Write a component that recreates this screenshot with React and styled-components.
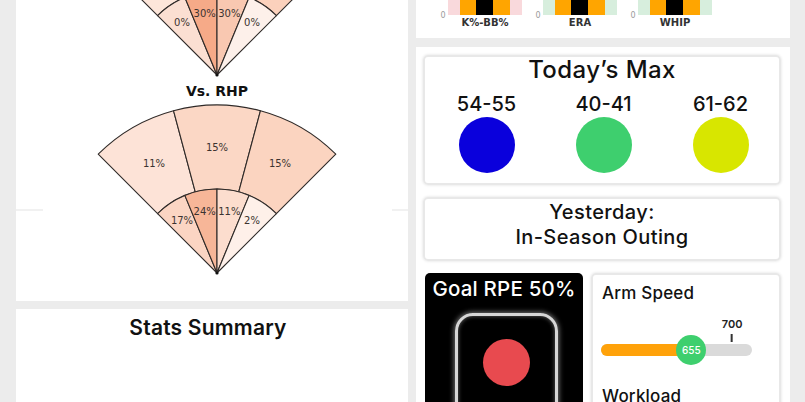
import React from 'react'
import styled, { createGlobalStyle } from 'styled-components'

const GlobalStyle = createGlobalStyle`
    html, body {
        margin: 0;
        overflow: hidden;
        background: #ececec;
    }
    body {
        font-family: Inter, "Noto Sans", sans-serif;
        color: #111;
    }
`

const ScPage = styled.div`
    display: grid;
    grid-template-columns: 392px 374px;
    column-gap: 8px;
    align-items: start;
    padding: 0 15px 0 16px;
    margin-top: -140px;
`
const ScColumn = styled.div`
    display: flex;
    flex-direction: column;
    gap: ${props => props.gap}px;
`
const ScCard = styled.div`
    background: #fff;
    height: ${props => props.height}px;
    padding: ${props => props.pad || '0'};
    box-sizing: border-box;
    overflow: hidden;
`
const ScCardTitle = styled.h2`
    margin: 0;
    text-align: center;
    font-size: 21px;
    line-height: 26px;
    font-weight: 600;
    letter-spacing: 0.2px;
    padding-right: 8px;
`
const ScChart = styled.svg`
    display: block;
`
const ScPanel = styled.div`
    background: #fff;
    height: 420px;
    padding: 8px 9px 0 7px;
    display: flex;
    flex-direction: column;
    gap: 12px;
`
const ScOutlineBox = styled.div`
    border: 2px solid #e8e8e8;
    border-radius: 5px;
    box-shadow: 0 0 3px rgba(0, 0, 0, 0.14);
    text-align: center;
    padding: ${props => props.pad || '0'};
`
const ScBoxTitle = styled.div`
    font-size: 24px;
    line-height: 26px;
    font-weight: 500;
    letter-spacing: 0.4px;
`
const ScMaxGrid = styled.div`
    display: grid;
    grid-template-columns: repeat(3, 1fr);
    margin-top: 9px;
    padding-left: 3px;
`
const ScMaxItem = styled.div`
    display: flex;
    flex-direction: column;
    align-items: center;
    font-size: 20px;
    line-height: 24px;
    font-weight: 500;
`
const ScDot = styled.div`
    width: ${props => props.size}px;
    height: ${props => props.size}px;
    margin-top: ${props => props.mt || 0}px;
    border-radius: 50%;
    background: ${props => props.color};
`
const ScOuting = styled.div`
    font-size: 20px;
    line-height: 25px;
    font-weight: 500;
    letter-spacing: 0.4px;
`
const ScRow = styled.div`
    display: flex;
    gap: 8px;
    padding-left: 2px;
`
const ScRpe = styled.div`
    width: 158px;
    height: 200px;
    background: #000;
    border-radius: 5px;
    color: #fff;
    padding-top: 4px;
    box-sizing: border-box;
    display: flex;
    flex-direction: column;
    align-items: center;
`
const ScRpeTitle = styled.div`
    font-size: 20.5px;
    line-height: 24px;
    font-weight: 500;
    letter-spacing: 0.2px;
    white-space: nowrap;
`
const ScGauge = styled.div`
    width: 97px;
    height: 150px;
    margin-top: 12px;
    margin-left: 4px;
    border: 3px solid #d6d6d6;
    border-radius: 18px;
    box-shadow: 0 0 5px 1px rgba(255, 255, 255, 0.45), inset 0 0 4px rgba(255, 255, 255, 0.4);
    display: flex;
    justify-content: center;
`
const ScMetric = styled(ScOutlineBox)`
    width: 190px;
    height: 200px;
    box-sizing: border-box;
    text-align: left;
    padding: 7px 9px 0;
`
const ScMetricLabel = styled.div`
    font-size: 17px;
    line-height: 22px;
    font-weight: 500;
    letter-spacing: 0.2px;
    margin-top: ${props => props.mt || 0}px;
`
const ScSlider = styled.div`
    position: relative;
    width: 151px;
    height: 50px;
    margin: 13px 0 0 -1px;
`
const ScMarker = styled.div`
    position: absolute;
    top: 0;
    display: flex;
    flex-direction: column;
    align-items: center;
    transform: translateX(-50%);
    font-size: 11px;
    line-height: 14px;
    font-weight: 600;
    color: #222;
    &::after {
        content: '';
        width: 2px;
        height: 8px;
        margin-top: 3px;
        background: #333;
    }
`
const ScTrack = styled.div`
    position: absolute;
    top: 27px;
    left: 0;
    right: 0;
    height: 12px;
    border-radius: 6px;
    background: #dadada;
    overflow: hidden;
`
const ScFill = styled.div`
    height: 100%;
    background: #ffa20a;
`
const ScThumb = styled.div`
    position: absolute;
    top: 18px;
    width: 30px;
    height: 30px;
    border-radius: 50%;
    background: #3ecf6e;
    transform: translateX(-50%);
    color: #fff;
    font-size: 10px;
    font-weight: 500;
    display: flex;
    align-items: center;
    justify-content: center;
`

// spray fan geometry (chart units, apex at bottom centre)
const CX = 201
const CY = 190
const R_IN = 84
const R_OUT = 168

const polar = (r, deg) => {
    const a = deg * Math.PI / 180
    return [CX + r * Math.sin(a), CY - r * Math.cos(a)]
}

const wedge = (r0, r1, a0, a1) => {
    const [x1, y1] = polar(r1, a0)
    const [x2, y2] = polar(r1, a1)
    if (r0 === 0) return `M${CX},${CY} L${x1},${y1} A${r1},${r1} 0 0 1 ${x2},${y2} Z`
    const [x3, y3] = polar(r0, a1)
    const [x4, y4] = polar(r0, a0)
    return `M${x1},${y1} A${r1},${r1} 0 0 1 ${x2},${y2} L${x3},${y3} A${r0},${r0} 0 0 0 ${x4},${y4} Z`
}

const OUTER_ANGLES = [[-45, -15], [-15, 15], [15, 45]]
const INNER_ANGLES = [[-45, -22.5], [-22.5, 0], [0, 22.5], [22.5, 45]]

const sprayCharts = [
    {
        title: 'Vs. LHP',
        outer: [['8%', '#fde6da'], ['12%', '#fbdccd'], ['20%', '#fbd1bc']],
        inner: [['0%', '#fbdfd2'], ['30%', '#f6aa88'], ['30%', '#f9c8b1'], ['0%', '#fdf0ea']],
    },
    {
        title: 'Vs. RHP',
        outer: [['11%', '#fde3d7'], ['15%', '#fbd7c5'], ['15%', '#fbd4c0']],
        inner: [['17%', '#fbd5c3'], ['24%', '#f7b698'], ['11%', '#fcddce'], ['2%', '#fef0e9']],
        seams: true,
    },
]

const SprayChart = ({ chart }) => {
    const label = (text, r, a0, a1, key) => {
        const [x, y] = polar(r, (a0 + a1) / 2)
        return (
            <text key={key} x={x} y={y} textAnchor="middle" dominantBaseline="central"
                fontSize="10" fill="#3b3330" fontFamily="'DejaVu Sans', sans-serif">{text}</text>
        )
    }
    return (
        <ScChart width="392" height="198" viewBox="0 0 392 198">
            <text x={CX} y="8" textAnchor="middle" dominantBaseline="central" fontSize="14"
                fontWeight="700" fill="#111" fontFamily="'DejaVu Sans', sans-serif">{chart.title}</text>
            {chart.seams && (
                <g stroke="#ececec" strokeWidth="1.5">
                    <line x1="0" y1="127" x2="27" y2="127" />
                    <line x1="376" y1="127" x2="392" y2="127" />
                </g>
            )}
            <g stroke="#2f2a28" strokeWidth="1.1" strokeLinejoin="round">
                {chart.outer.map(([, c], i) => (
                    <path key={'o' + i} d={wedge(R_IN, R_OUT, ...OUTER_ANGLES[i])} fill={c} />
                ))}
                {chart.inner.map(([, c], i) => (
                    <path key={'i' + i} d={wedge(0, R_IN, ...INNER_ANGLES[i])} fill={c} />
                ))}
            </g>
            {chart.outer.map(([v], i) => label(v, 126, ...OUTER_ANGLES[i], 'lo' + i))}
            {chart.inner.map(([v], i) => label(v, 63, ...INNER_ANGLES[i], 'li' + i))}
            <circle cx={CX} cy={CY} r="1.6" fill="#111" />
        </ScChart>
    )
}

const targets = [
    { label: 'K%-BB%', x: 32, bg: '#f9d9dc', top: 60 },
    { label: 'ERA', x: 127, bg: '#d7eedd', top: 40 },
    { label: 'WHIP', x: 222, bg: '#d7eedd', top: 50 },
]

const TargetBars = () => (
    <ScChart width="374" height="178" viewBox="0 0 374 178">
        {targets.map(t => (
            <g key={t.label}>
                <rect x={t.x} y={t.top} width="74" height={155 - t.top} fill={t.bg} />
                <rect x={t.x + 12} y={t.top + 20} width="50" height={135 - t.top} fill="#ffa500" />
                <rect x={t.x + 28} y={t.top + 34} width="17" height={121 - t.top} fill="#000" />
                <text x={t.x - 5} y="155" textAnchor="middle" dominantBaseline="central" fontSize="8"
                    fill="#9a9a9a" fontFamily="'DejaVu Sans', sans-serif">0</text>
                <text x={t.x + 37} y="162" textAnchor="middle" dominantBaseline="central" fontSize="10"
                    fontWeight="700" fill="#333" fontFamily="'DejaVu Sans', sans-serif">{t.label}</text>
            </g>
        ))}
    </ScChart>
)

const maxes = [
    { range: '54-55', color: '#0a00dc' },
    { range: '40-41', color: '#3ecf6e' },
    { range: '61-62', color: '#d8e600' },
]

const armSpeed = { value: 655, target: 700, min: 555, max: 722 }

const App = () => {
    const pct = v => ((v - armSpeed.min) / (armSpeed.max - armSpeed.min)) * 100
    return (
        <>
            <GlobalStyle />
            <ScPage>
                <ScColumn gap={8}>
                    <ScCard height={441} pad="25px 0 0">
                        {sprayCharts.map(c => <SprayChart key={c.title} chart={c} />)}
                    </ScCard>
                    <ScCard height={300} pad="6px 0 0">
                        <ScCardTitle>Stats Summary</ScCardTitle>
                    </ScCard>
                </ScColumn>
                <ScColumn gap={9}>
                    <ScCard height={178}>
                        <TargetBars />
                    </ScCard>
                    <ScPanel>
                        <ScOutlineBox pad="0 0 10px">
                            <ScBoxTitle>Today’s Max</ScBoxTitle>
                            <ScMaxGrid>
                                {maxes.map(m => (
                                    <ScMaxItem key={m.range}>
                                        {m.range}
                                        <ScDot size={56} mt={1} color={m.color} />
                                    </ScMaxItem>
                                ))}
                            </ScMaxGrid>
                        </ScOutlineBox>
                        <ScOutlineBox pad="1px 0 9px">
                            <ScOuting>Yesterday:</ScOuting>
                            <ScOuting>In-Season Outing</ScOuting>
                        </ScOutlineBox>
                        <ScRow>
                            <ScRpe>
                                <ScRpeTitle>Goal RPE 50%</ScRpeTitle>
                                <ScGauge>
                                    <ScDot size={47} mt={23} color="#e84a4f" />
                                </ScGauge>
                            </ScRpe>
                            <ScMetric>
                                <ScMetricLabel>Arm Speed</ScMetricLabel>
                                <ScSlider>
                                    <ScMarker style={{ left: `${pct(armSpeed.target)}%` }}>{armSpeed.target}</ScMarker>
                                    <ScTrack>
                                        <ScFill style={{ width: `${pct(armSpeed.value)}%` }} />
                                    </ScTrack>
                                    <ScThumb style={{ left: `${pct(armSpeed.value)}%` }}>{armSpeed.value}</ScThumb>
                                </ScSlider>
                                <ScMetricLabel mt={18}>Workload</ScMetricLabel>
                            </ScMetric>
                        </ScRow>
                    </ScPanel>
                </ScColumn>
            </ScPage>
        </>
    )
}

export default App
